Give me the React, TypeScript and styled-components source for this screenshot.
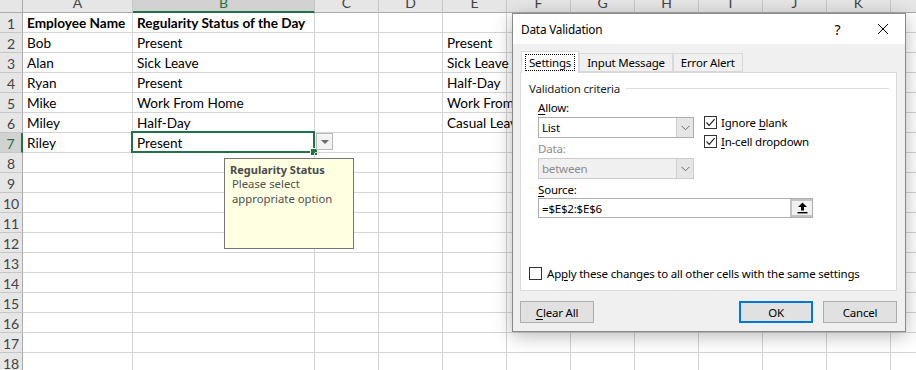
import styled, { createGlobalStyle } from "styled-components";

const GlobalStyle = createGlobalStyle`
    * { box-sizing: border-box; }
    body {
        margin: 0;
        overflow: hidden;
        background: #ffffff;
    }
`;

const sheetFont = `"Lato", "Liberation Sans", sans-serif`;
const uiFont = `"Noto Sans", "Liberation Sans", sans-serif`;

//Spreadsheet
const Page = styled.div`
    position: relative;
    width: 916px;
    height: 370px;
    overflow: hidden;
    font-family: ${sheetFont};
`;

const Sheet = styled.div`
    display: grid;
    grid-template-columns: 23px 110px 182px repeat(10, 64px);
    grid-template-rows: 13px repeat(18, 20px);
`;

const Corner = styled.div`
    background: #e6e6e6;
    border-right: 1px solid #ababab;
    border-bottom: 1px solid #ababab;
`;

const ColHeader = styled.div<{ $active?: boolean }>`
    height: 13px;
    overflow: hidden;
    display: flex;
    align-items: flex-end;
    justify-content: center;
    background: ${(p) => (p.$active ? "#d2d2d2" : "#e6e6e6")};
    border-right: 1px solid #c6c6c6;
    border-bottom: ${(p) => (p.$active ? "2px solid #217346" : "1px solid #ababab")};
    color: ${(p) => (p.$active ? "#217346" : "#444444")};
    font-size: 14px;
    line-height: 20px;
    span {
        margin-bottom: ${(p) => (p.$active ? "-1px" : "0")};
        transform: translateY(1px);
    }
`;

const RowHeader = styled.div<{ $active?: boolean }>`
    display: flex;
    align-items: center;
    justify-content: center;
    background: ${(p) => (p.$active ? "#d2d2d2" : "#e6e6e6")};
    border-right: ${(p) => (p.$active ? "2px solid #217346" : "1px solid #ababab")};
    border-bottom: 1px solid #c6c6c6;
    color: ${(p) => (p.$active ? "#217346" : "#444444")};
    font-size: 14px;
    padding-top: 2px;
`;

const Cell = styled.div<{ $bold?: boolean; $selected?: boolean }>`
    position: relative;
    border-right: 1px solid #d4d4d4;
    border-bottom: 1px solid #d4d4d4;
    padding: 1px 0 0 4px;
    font-size: 13.6px;
    line-height: 18px;
    font-weight: ${(p) => (p.$bold ? 700 : 400)};
    color: #000000;
    white-space: nowrap;
    ${(p) =>
        p.$selected &&
        `
        &::before {
            content: "";
            position: absolute;
            left: -2px;
            top: -2px;
            right: -1px;
            bottom: -1px;
            border: 2px solid #217346;
        }
        &::after {
            content: "";
            position: absolute;
            right: -4px;
            bottom: -4px;
            width: 6px;
            height: 6px;
            background: #217346;
            border: 1px solid #ffffff;
        }
    `}
`;

const DropArrow = styled.div`
    position: absolute;
    left: 316px;
    top: 133px;
    width: 17px;
    height: 17px;
    background: #f3f3f3;
    border: 1px solid #b9b9b9;
    display: flex;
    align-items: center;
    justify-content: center;
    &::after {
        content: "";
        border-left: 4px solid transparent;
        border-right: 4px solid transparent;
        border-top: 4px solid #6d6d6d;
    }
`;

const Tip = styled.div`
    position: absolute;
    left: 224px;
    top: 158px;
    width: 130px;
    height: 91px;
    background: #ffffe1;
    border: 1px solid #767676;
    padding: 4px 5px;
    font-family: ${uiFont};
    font-size: 11px;
    line-height: 15px;
    color: #505050;
`;

const TipTitle = styled.div`
    font-weight: 700;
    color: #4a4a4a;
    line-height: 14px;
`;

const TipText = styled.div`
    padding-left: 2px;
    line-height: 14.5px;
    font-size: 11.3px;
`;

//Dialog
const Dialog = styled.div`
    position: absolute;
    left: 512px;
    top: 13px;
    width: 394px;
    height: 319px;
    background: #f0f0f0;
    border: 1px solid #8a8a8a;
    box-shadow: 0 4px 18px rgba(0, 0, 0, 0.28);
    display: flex;
    flex-direction: column;
    font-family: ${uiFont};
    font-size: 11.5px;
    letter-spacing: -0.2px;
    color: #000000;
`;

const TitleBar = styled.div`
    height: 30px;
    background: #ffffff;
    display: flex;
    align-items: center;
    padding-left: 8px;
    font-size: 11.8px;
`;

const TitleText = styled.div`
    flex: 1;
`;

const TitleButton = styled.div`
    width: 45px;
    height: 30px;
    display: flex;
    align-items: center;
    justify-content: center;
    font-size: 14px;
`;

const DialogBody = styled.div`
    flex: 1;
    display: flex;
    flex-direction: column;
    padding: 7px 8px 9px 7px;
`;

const Tabs = styled.div`
    display: flex;
    align-items: flex-end;
    height: 21px;
    padding-left: 1px;
`;

const Tab = styled.div<{ $active?: boolean }>`
    height: ${(p) => (p.$active ? "22px" : "19px")};
    margin-bottom: ${(p) => (p.$active ? "-1px" : "0")};
    padding: ${(p) => (p.$active ? "0 3px" : "0 7px")};
    display: flex;
    align-items: center;
    background: ${(p) => (p.$active ? "#ffffff" : "#f0f0f0")};
    border: 1px solid #d9d9d9;
    border-bottom: ${(p) => (p.$active ? "none" : "1px solid #d9d9d9")};
    position: relative;
    z-index: ${(p) => (p.$active ? 1 : 0)};
    span {
        padding: 0 3px;
        border: ${(p) => (p.$active ? "1px dotted #000000" : "1px solid transparent")};
    }
`;

const Panel = styled.div`
    height: 219px;
    background: #ffffff;
    border: 1px solid #d9d9d9;
    display: flex;
    flex-direction: column;
    padding: 7px 7px 9px 8px;
`;

const Legend = styled.div`
    display: flex;
    align-items: center;
    gap: 6px;
    height: 16px;
    color: #1e1e1e;
    &::after {
        content: "";
        flex: 1;
        height: 1px;
        background: #dcdcdc;
    }
`;

const Criteria = styled.div`
    display: flex;
    gap: 10px;
    padding-left: 9px;
    margin-top: 4px;
`;

const Column = styled.div<{ $width?: number; $offset?: number }>`
    display: flex;
    flex-direction: column;
    width: ${(p) => (p.$width ? `${p.$width}px` : "auto")};
    padding-top: ${(p) => p.$offset ?? 0}px;
`;

const Label = styled.div<{ $disabled?: boolean }>`
    height: 16px;
    line-height: 16px;
    margin-bottom: 1px;
    color: ${(p) => (p.$disabled ? "#8d8d8d" : "#000000")};
`;

const Key = styled.span`
    text-decoration: underline;
    text-underline-offset: 2px;
`;

const Select = styled.div<{ $disabled?: boolean }>`
    height: 21px;
    display: flex;
    border: 1px solid ${(p) => (p.$disabled ? "#cccccc" : "#adadad")};
    background: ${(p) => (p.$disabled ? "#f0f0f0" : "#ffffff")};
    color: ${(p) => (p.$disabled ? "#8d8d8d" : "#000000")};
    margin-bottom: 3px;
`;

const SelectValue = styled.div`
    flex: 1;
    display: flex;
    align-items: center;
    padding-left: 3px;
`;

const SelectButton = styled.div`
    width: 17px;
    display: flex;
    align-items: center;
    justify-content: center;
    background: #e6e6e6;
    border-left: 1px solid #cfcfcf;
`;

const CheckRow = styled.label`
    display: flex;
    align-items: center;
    gap: 4px;
    height: 19px;
`;

const Box = styled.span`
    width: 13px;
    height: 13px;
    border: 1px solid #333333;
    background: #ffffff;
    display: flex;
    align-items: center;
    justify-content: center;
`;

const SourceField = styled.div`
    margin-left: 9px;
    margin-top: -1px;
    width: 275px;
    height: 20px;
    display: flex;
    border: 1px solid #adadad;
    background: #ffffff;
`;

const SourceValue = styled.div`
    flex: 1;
    display: flex;
    align-items: center;
    padding-left: 3px;
`;

const RefButton = styled.div`
    width: 22px;
    display: flex;
    align-items: center;
    justify-content: center;
    background: #f0f0f0;
    border: 2px solid #c4c4c4;
    border-right: none;
`;

const ApplyRow = styled(CheckRow)`
    margin-top: auto;
    gap: 5px;
    height: 16px;
`;

const Buttons = styled.div`
    display: flex;
    gap: 10px;
    margin-top: 10px;
`;

const Button = styled.div<{ $primary?: boolean }>`
    width: 74px;
    height: 22px;
    display: flex;
    align-items: center;
    justify-content: center;
    background: #e1e1e1;
    border: ${(p) => (p.$primary ? "2px solid #0078d7" : "1px solid #adadad")};
    &:first-child {
        margin-right: auto;
    }
`;

function Chevron() {
    return (
        <svg width="9" height="6" viewBox="0 0 9 6">
            <path d="M0.5 0.8 L4.5 4.8 L8.5 0.8" fill="none" stroke="#6b6b6b" strokeWidth="1" />
        </svg>
    );
}

function Tick() {
    return (
        <svg width="11" height="11" viewBox="0 0 11 11">
            <path d="M1.5 5.5 L4.2 8.3 L9.6 2.2" fill="none" stroke="#222222" strokeWidth="1.2" />
        </svg>
    );
}

function RefIcon() {
    return (
        <svg width="11" height="12" viewBox="0 0 11 12">
            <path d="M5.5 0.5 L10 5 L7 5 L7 8.5 L4 8.5 L4 5 L1 5 Z" fill="#000000" />
            <rect x="0.5" y="10" width="10" height="1.4" fill="#000000" />
        </svg>
    );
}

const columns = ["A", "B", "C", "D", "E", "F", "G", "H", "I", "J", "K", "L"];

const rows: string[][] = [
    ["Employee Name", "Regularity Status of the Day", "", "", ""],
    ["Bob", "Present", "", "", "Present"],
    ["Alan", "Sick Leave", "", "", "Sick Leave"],
    ["Ryan", "Present", "", "", "Half-Day"],
    ["Mike", "Work From Home", "", "", "Work From Home"],
    ["Miley", "Half-Day", "", "", "Casual Leave"],
    ["Riley", "Present", "", "", ""],
];

export default function App() {
    const allRows = Array.from({ length: 18 }, (_, i) => rows[i] ?? []);

    return (
        <>
            <GlobalStyle />
            <Page>
                <Sheet>
                    <Corner />
                    {columns.map((c) => (
                        <ColHeader key={c} $active={c === "B"}>
                            <span>{c}</span>
                        </ColHeader>
                    ))}
                    {allRows.map((row, r) => [
                        <RowHeader key={`h${r}`} $active={r === 6}>
                            {r + 1}
                        </RowHeader>,
                        ...columns.map((c, ci) => (
                            <Cell
                                key={`${r}-${c}`}
                                $bold={r === 0}
                                $selected={r === 6 && ci === 1}
                            >
                                {row[ci] ?? ""}
                            </Cell>
                        )),
                    ])}
                </Sheet>

                <DropArrow />

                <Tip>
                    <TipTitle>Regularity Status</TipTitle>
                    <TipText>Please select</TipText>
                    <TipText>appropriate option</TipText>
                </Tip>

                <Dialog>
                    <TitleBar>
                        <TitleText>Data Validation</TitleText>
                        <TitleButton>?</TitleButton>
                        <TitleButton>
                            <svg width="12" height="12" viewBox="0 0 12 12">
                                <path d="M1 1 L11 11 M11 1 L1 11" stroke="#000000" strokeWidth="1" />
                            </svg>
                        </TitleButton>
                    </TitleBar>
                    <DialogBody>
                        <Tabs>
                            <Tab $active>
                                <span>Settings</span>
                            </Tab>
                            <Tab>Input Message</Tab>
                            <Tab>Error Alert</Tab>
                        </Tabs>
                        <Panel>
                            <Legend>Validation criteria</Legend>
                            <Criteria>
                                <Column $width={156}>
                                    <Label>
                                        <Key>A</Key>llow:
                                    </Label>
                                    <Select>
                                        <SelectValue>List</SelectValue>
                                        <SelectButton>
                                            <Chevron />
                                        </SelectButton>
                                    </Select>
                                    <Label $disabled>Data:</Label>
                                    <Select $disabled>
                                        <SelectValue>between</SelectValue>
                                        <SelectButton>
                                            <Chevron />
                                        </SelectButton>
                                    </Select>
                                    <Label>
                                        <Key>S</Key>ource:
                                    </Label>
                                </Column>
                                <Column $offset={13}>
                                    <CheckRow>
                                        <Box>
                                            <Tick />
                                        </Box>
                                        <span>
                                            Ignore <Key>b</Key>lank
                                        </span>
                                    </CheckRow>
                                    <CheckRow>
                                        <Box>
                                            <Tick />
                                        </Box>
                                        <span>
                                            <Key>I</Key>n-cell dropdown
                                        </span>
                                    </CheckRow>
                                </Column>
                            </Criteria>
                            <SourceField>
                                <SourceValue>=$E$2:$E$6</SourceValue>
                                <RefButton>
                                    <RefIcon />
                                </RefButton>
                            </SourceField>
                            <ApplyRow>
                                <Box />
                                <span>
                                    Ap<Key>p</Key>ly these changes to all other cells with the same settings
                                </span>
                            </ApplyRow>
                        </Panel>
                        <Buttons>
                            <Button>
                                <span>
                                    <Key>C</Key>lear All
                                </span>
                            </Button>
                            <Button $primary>OK</Button>
                            <Button>Cancel</Button>
                        </Buttons>
                    </DialogBody>
                </Dialog>
            </Page>
        </>
    );
}
